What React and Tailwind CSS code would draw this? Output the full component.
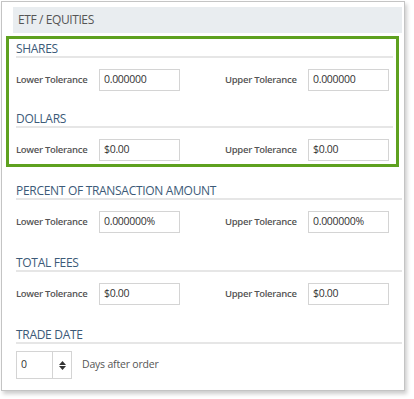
import React from "react";

const font = { fontFamily: '"Open Sans", "Noto Sans", sans-serif' };

function Heading({ children }) {
  return (
    <div className="h-[17px] border-b-2 border-[#e6e6e6] text-[12px] leading-[15px] text-[#3c5a78] tracking-[-0.3px]">
      {children}
    </div>
  );
}

function Field({ label, value }) {
  return (
    <div className="flex items-center">
      <div className="w-[83px] text-[9.5px] font-semibold text-[#555] tracking-[-0.3px]">{label}</div>
      <div className="w-[81px] h-[22px] border border-[#d4d4d4] flex items-center pl-[4px] text-[10.5px] text-[#333] tracking-[-0.3px]">
        {value}
      </div>
    </div>
  );
}

function Row({ value }) {
  return (
    <div className="flex mt-[11px]">
      <div className="w-[209px]">
        <Field label="Lower Tolerance" value={value} />
      </div>
      <Field label="Upper Tolerance" value={value} />
    </div>
  );
}

export default function App() {
  return (
    <div className="w-[414px] h-[399px] bg-white" style={font}>
      <div className="ml-[1px] pt-[1px]">
        <div className="w-[404px] h-[390px] border border-[#c4c4c4] shadow-[2px_3px_4px_rgba(0,0,0,0.2)] bg-white">
          <div className="ml-[11px] mr-[2px] mt-[5px] h-[26px] bg-[#e9edf0] flex items-center pl-[5px] text-[12px] text-[#555] tracking-[-0.4px]">
            ETF / EQUITIES
          </div>
          <div className="ml-[4px] mt-[3px] w-[393px] border-[3px] border-[#5ea11f] pt-[2px] pb-[3px] pl-[7px] pr-[3px]">
            <Heading>SHARES</Heading>
            <Row value="0.000000" />
            <div className="mt-[20px]">
              <Heading>DOLLARS</Heading>
            </div>
            <Row value="$0.00" />
          </div>
          <div className="ml-[14px] mr-[2px]">
            <div className="mt-[16px]">
              <Heading>PERCENT OF TRANSACTION AMOUNT</Heading>
            </div>
            <Row value="0.000000%" />
            <div className="mt-[22px]">
              <Heading>TOTAL FEES</Heading>
            </div>
            <Row value="$0.00" />
            <div className="mt-[22px]">
              <Heading>TRADE DATE</Heading>
            </div>
            <div className="flex items-center mt-[7px]">
              <div className="w-[56px] h-[28px] border border-[#d4d4d4] flex">
                <div className="w-[36px] border-r border-[#d4d4d4] flex items-center pl-[4px] text-[10.5px] text-[#333]">0</div>
                <div className="flex-1 flex flex-col items-center justify-center gap-[1px]">
                  <svg width="7" height="4" viewBox="0 0 7 4"><path d="M0 4 L3.5 0 L7 4 Z" fill="#333" /></svg>
                  <svg width="7" height="4" viewBox="0 0 7 4"><path d="M0 0 L3.5 4 L7 0 Z" fill="#333" /></svg>
                </div>
              </div>
              <div className="ml-[10px] text-[10.5px] text-[#555] tracking-[-0.2px]">Days after order</div>
            </div>
          </div>
        </div>
      </div>
    </div>
  );
}
